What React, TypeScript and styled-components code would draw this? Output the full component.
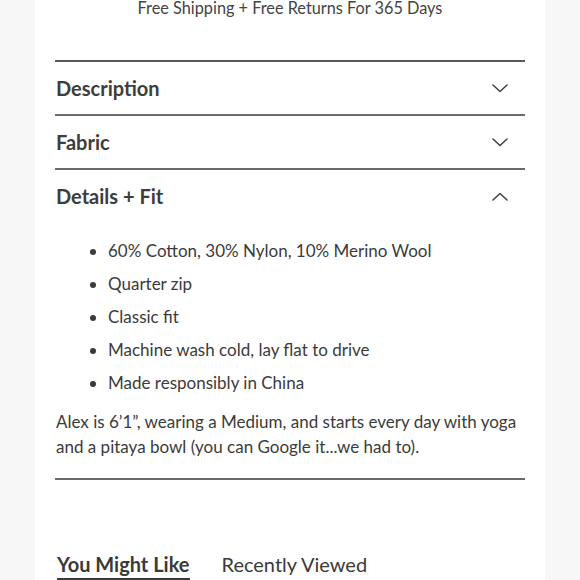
import React from 'react';
import styled, { createGlobalStyle } from 'styled-components';

const GlobalStyle = createGlobalStyle`
    html, body {
        margin: 0;
        padding: 0;
        background: #f7f7f7;
    }
    body {
        font-family: Lato, "Open Sans", sans-serif;
        color: #3b3b3b;
    }
`;

const Page = styled.div`
    display: flex;
    justify-content: center;
    height: 580px;
    overflow: hidden;
`;

const Panel = styled.div`
    width: 470px;
    padding: 0 20px;
    background: #ffffff;
    min-height: 580px;
`;

const Notice = styled.div`
    margin-top: -2px;
    height: 62px;
    font-size: 16.3px;
    line-height: 20px;
    text-align: center;
    color: #444444;
`;

const Accordion = styled.div`
    border-top: 2px solid #585858;
`;

const Item = styled.div`
    border-bottom: 2px solid #6a6a6a;
`;

const Header = styled.div`
    display: flex;
    align-items: center;
    justify-content: space-between;
    height: 52px;
    padding: 0 17px 0 1px;
    font-size: 20px;
    font-weight: 700;
    color: #3d3d3d;
`;

const Body = styled.div`
    padding: 12px 0 19px 1px;
`;

const List = styled.ul`
    margin: 0 0 10px;
    padding: 0 0 0 52px;
    font-size: 17px;
    line-height: 33px;
    color: #3b3b3b;
`;

const Note = styled.p`
    margin: 0;
    font-size: 17px;
    line-height: 25px;
    color: #3b3b3b;
`;

const Tabs = styled.div`
    display: flex;
    gap: 32px;
    margin-top: 72px;
    padding-left: 2px;
`;

const Tab = styled.div<{ $active?: boolean }>`
    font-size: 20px;
    line-height: 24px;
    padding-bottom: 2px;
    font-weight: ${(props): number => (props.$active ? 700 : 400)};
    color: #3a3a3a;
    border-bottom: 2px solid ${(props): string => (props.$active ? '#3a3a3a' : 'transparent')};
`;

const Chevron: React.FC<{ up?: boolean }> = ({ up }) => (
    <svg width="16" height="9" viewBox="0 0 16 9" fill="none">
        <path
            d={up ? 'M1 8 L8 1.5 L15 8' : 'M1 1 L8 7.5 L15 1'}
            stroke="#444"
            strokeWidth="1.6"
            strokeLinecap="round"
            strokeLinejoin="round"
        />
    </svg>
);

const details = [
    '60% Cotton, 30% Nylon, 10% Merino Wool',
    'Quarter zip',
    'Classic fit',
    'Machine wash cold, lay flat to drive',
    'Made responsibly in China'
];

export default function App(): React.ReactElement {
    return (
        <>
            <GlobalStyle />
            <Page>
                <Panel>
                    <Notice>Free Shipping + Free Returns For 365 Days</Notice>
                    <Accordion>
                        <Item>
                            <Header>
                                Description
                                <Chevron />
                            </Header>
                        </Item>
                        <Item>
                            <Header>
                                Fabric
                                <Chevron />
                            </Header>
                        </Item>
                        <Item>
                            <Header>
                                Details + Fit
                                <Chevron up />
                            </Header>
                            <Body>
                                <List>
                                    {details.map((d) => (
                                        <li key={d}>{d}</li>
                                    ))}
                                </List>
                                <Note>
                                    Alex is 6’1”, wearing a Medium, and starts every day with yoga
                                    and a pitaya bowl (you can Google it...we had to).
                                </Note>
                            </Body>
                        </Item>
                    </Accordion>
                    <Tabs>
                        <Tab $active>You Might Like</Tab>
                        <Tab>Recently Viewed</Tab>
                    </Tabs>
                </Panel>
            </Page>
        </>
    );
}
